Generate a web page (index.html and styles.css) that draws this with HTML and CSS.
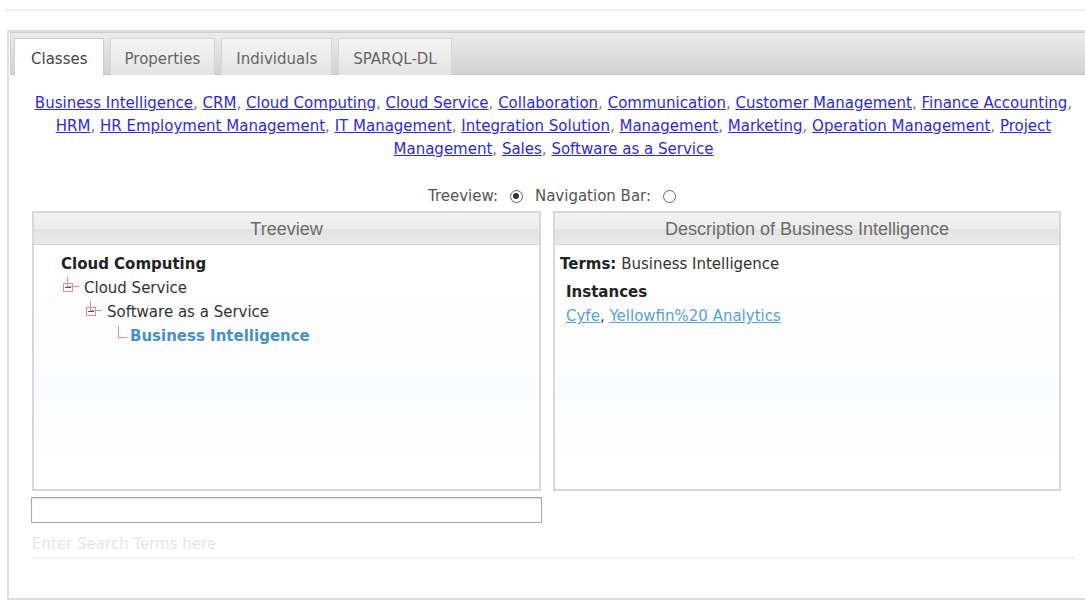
FILE: index.html
```html
<!DOCTYPE html>
<html>
<head>
<meta charset="utf-8">
<title>Ontology Browser</title>
<link rel="stylesheet" href="styles.css">
</head>
<body>
<div class="topline"></div>
<div class="frame">
  <div class="tabbar">
    <div class="tab active">Classes</div>
    <div class="tab">Properties</div>
    <div class="tab">Individuals</div>
    <div class="tab">SPARQL-DL</div>
  </div>
  <div class="tabbody">
    <p class="classlist">
      <a href="#">Business Intelligence</a>, <a href="#">CRM</a>, <a href="#">Cloud Computing</a>, <a href="#">Cloud Service</a>, <a href="#">Collaboration</a>, <a href="#">Communication</a>, <a href="#">Customer Management</a>, <a href="#">Finance Accounting</a>, <a href="#">HRM</a>, <a href="#">HR Employment Management</a>, <a href="#">IT Management</a>, <a href="#">Integration Solution</a>, <a href="#">Management</a>, <a href="#">Marketing</a>, <a href="#">Operation Management</a>, <a href="#">Project Management</a>, <a href="#">Sales</a>, <a href="#">Software as a Service</a>
    </p>
    <div class="viewmode">
      <span>Treeview:</span>
      <span class="radio checked"></span>
      <span>Navigation Bar:</span>
      <span class="radio"></span>
    </div>
    <div class="panels">
      <div class="panel">
        <div class="panel-head">Treeview</div>
        <div class="panel-body tree">
          <div class="node root">Cloud Computing</div>
          <div class="node lvl1"><span class="toggle"></span>Cloud Service</div>
          <div class="node lvl2"><span class="toggle"></span>Software as a Service</div>
          <div class="node lvl3 current"><span class="elbow"></span>Business Intelligence</div>
        </div>
      </div>
      <div class="panel">
        <div class="panel-head">Description of Business Intelligence</div>
        <div class="panel-body desc">
          <div class="terms"><b>Terms:</b> Business Intelligence</div>
          <div class="inst-title">Instances</div>
          <div class="inst"><a href="#">Cyfe</a>, <a href="#">Yellowfin%20 Analytics</a></div>
        </div>
      </div>
    </div>
    <input class="search" type="text">
    <div class="hint">Enter Search Terms here</div>
  </div>
</div>
</body>
</html>
```

FILE: styles.css
```css
html, body {
  margin: 0;
  padding: 0;
  background: #fff;
  overflow: hidden;
}

body {
  font-family: "DejaVu Sans", Verdana, sans-serif;
  font-size: 15px;
  color: #333;
}

.topline {
  height: 9px;
  border-bottom: 2px solid #eeeeee;
  margin-left: 5px;
}

.frame {
  margin: 19px 0 0 7px;
  width: 1100px;
  height: 566px;
  border: 2px solid #dedede;
  border-right: none;
  padding: 0 0 0 1px;
  box-sizing: content-box;
}

/* tab strip */
.tabbar {
  display: flex;
  gap: 6px;
  height: 43px;
  padding: 5px 0 0 3px;
  box-sizing: border-box;
  background: linear-gradient(#ececec, #d2d2d2);
  border: 1px solid #cfcfcf;
  border-bottom: 1px solid #c8c8c8;
}

.tab {
  height: 37px;
  box-sizing: border-box;
  padding: 2px 14px 0;
  line-height: 36px;
  font-size: 15px;
  color: #666;
  background: linear-gradient(#f4f4f4, #e4e4e4);
  border: 1px solid #d6d6d6;
  border-bottom: none;
}

.tab.active {
  padding: 2px 15px 0 16px;
  background: #fff;
  color: #444;
  border-color: #cfcfcf;
  height: 38px;
}

.tabbody {
  padding: 0 10px 0 22px;
  width: 1043px;
}

.classlist {
  margin: 17px 0 0;
  text-align: center;
  line-height: 23px;
  color: #777;
}

.classlist a {
  color: #2b2bdc;
  text-decoration: underline;
}

.viewmode {
  display: flex;
  justify-content: center;
  align-items: center;
  gap: 9px;
  margin-top: 25px;
  height: 20px;
  color: #555;
}

.radio {
  width: 13px;
  height: 13px;
  border: 1px solid #666;
  border-radius: 50%;
  box-sizing: border-box;
  display: inline-block;
  position: relative;
  margin: 0 3px;
}

.radio.checked::after {
  content: "";
  position: absolute;
  left: 2.5px;
  top: 2.5px;
  width: 6px;
  height: 6px;
  border-radius: 50%;
  background: #333;
}

.panels {
  display: flex;
  gap: 12px;
  margin-top: 5px;
}

.panel {
  width: 509px;
  height: 280px;
  box-sizing: border-box;
  border: 2px solid #d8d8d8;
  display: flex;
  flex-direction: column;
}

.panel + .panel {
  width: 508px;
}

.panel-head {
  height: 31px;
  line-height: 33px;
  text-align: center;
  font-family: "Liberation Sans", Arial, sans-serif;
  font-size: 18px;
  color: #6b6b6b;
  background: linear-gradient(#f2f2f2 0%, #ededed 50%, #e3e3e3 51%, #e9e9e9 100%);
  border-bottom: 1px solid #d4d4d4;
}

.panel-body {
  flex: 1;
  background: linear-gradient(#fff, #fbfcfe 60%, #fff);
}

.tree {
  padding: 9px 0 0 27px;
}

.node {
  height: 24px;
  line-height: 20px;
  color: #333;
  display: flex;
  align-items: flex-start;
}

.node.root {
  font-weight: bold;
  color: #222;
}

.node.lvl1 { padding-left: 1px; }
.node.lvl2 { padding-left: 24px; }
.node.lvl3 { padding-left: 61px; }

.node.current {
  font-weight: bold;
  color: #4a8fc6;
}

/* expanded branch marker: small box with a minus, joined by connector lines */
.toggle {
  width: 22px;
  height: 20px;
  position: relative;
  flex: none;
}

.toggle::before {
  content: "";
  position: absolute;
  left: 1px;
  top: 5px;
  width: 8px;
  height: 7px;
  border: 1px solid #ee8c8c;
  background: linear-gradient(transparent 3px, #555 3px, #555 4px, transparent 4px) 1px 0 / 6px 100% no-repeat;
}

.toggle::after {
  content: "";
  position: absolute;
  left: 5px;
  top: -1px;
  width: 12px;
  height: 10px;
  border-left: 1px solid #ee8c8c;
  border-bottom: 1px solid #ee8c8c;
  box-sizing: border-box;
  clip-path: polygon(0 0, 2px 0, 2px 6px, 100% 6px, 100% 100%, 0 100%);
}

.elbow {
  width: 14px;
  height: 20px;
  flex: none;
  position: relative;
  margin-left: -6px;
}

.elbow::before {
  content: "";
  position: absolute;
  left: 2px;
  top: 0;
  width: 8px;
  height: 11px;
  border-left: 1px solid #ee8c8c;
  border-bottom: 1px solid #ee8c8c;
}

.desc {
  padding: 9px 0 0 5px;
}

.terms {
  line-height: 20px;
  color: #333;
}

.terms b {
  color: #222;
}

.inst-title {
  margin: 8px 0 0 6px;
  line-height: 20px;
  font-weight: bold;
  color: #222;
}

.inst {
  margin: 4px 0 0 6px;
  line-height: 20px;
  color: #333;
}

.inst a {
  color: #5c9fd6;
}

.search {
  display: block;
  margin: 6px 0 0 -1px;
  width: 511px;
  height: 26px;
  box-sizing: border-box;
  border: 1px solid #a8a8a8;
  box-shadow: inset 0 1px 1px #ddd;
  padding: 0 4px;
}

.hint {
  margin-top: 12px;
  padding-bottom: 4px;
  font-size: 15px;
  color: #e6e6e6;
  border-bottom: 2px solid #f0f0f0;
  width: 1042px;
}
```
